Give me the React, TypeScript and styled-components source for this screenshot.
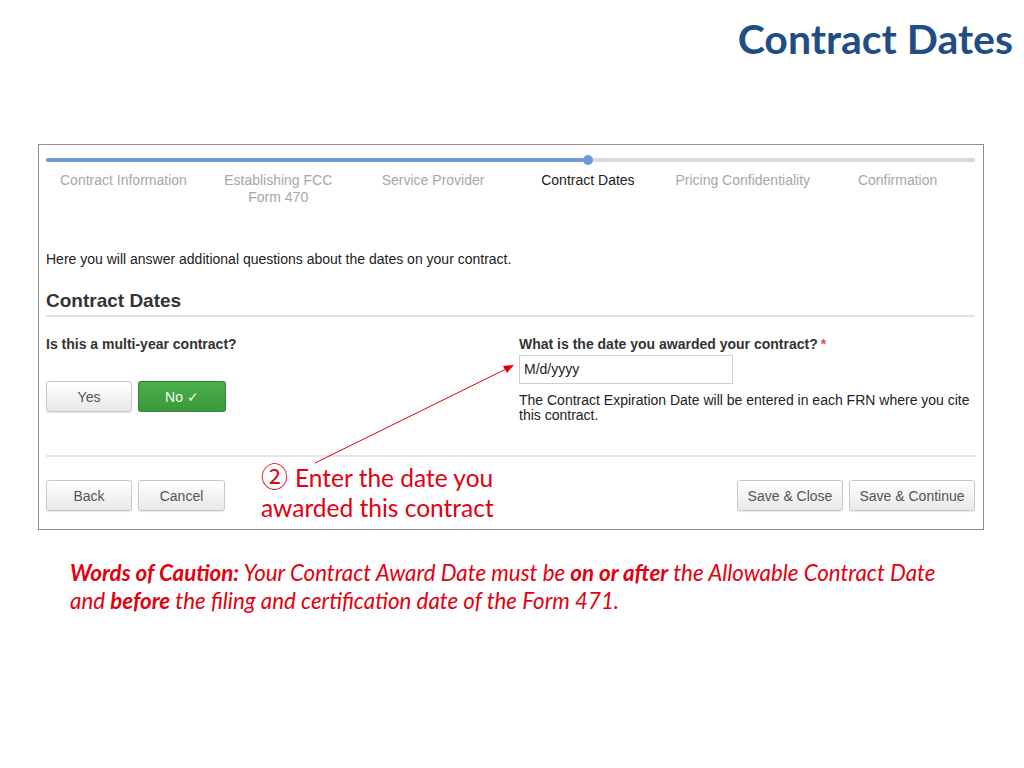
import styled, { createGlobalStyle, css } from "styled-components";

const GlobalStyle = createGlobalStyle`
  html, body {
    margin: 0;
    padding: 0;
    background: #fff;
  }
  * {
    box-sizing: border-box;
  }
`;

const red = "#e3000f";

const steps = [
  { label: "Contract Information", state: "done" },
  { label: "Establishing FCC Form 470", state: "done" },
  { label: "Service Provider", state: "done" },
  { label: "Contract Dates", state: "current" },
  { label: "Pricing Confidentiality", state: "todo" },
  { label: "Confirmation", state: "todo" },
];

const Slide = styled.div`
  position: relative;
  width: 1024px;
  height: 768px;
  overflow: hidden;
  font-family: "Liberation Sans", Arial, sans-serif;
`;

const TitleBar = styled.div`
  display: flex;
  justify-content: flex-end;
  height: 144px;
  padding: 14px 11px 0 0;
`;

const Title = styled.h1`
  margin: 0;
  font-family: Lato, "Open Sans", sans-serif;
  font-weight: 700;
  font-size: 41px;
  line-height: 50px;
  color: #1f4e87;
`;

const Panel = styled.div`
  margin-left: 38px;
  width: 946px;
  height: 386px;
  border: 1px solid #8c8c8c;
  padding: 13px 8px 0 7px;
  color: #333;
  font-size: 14px;
`;

const Track = styled.div`
  position: relative;
  height: 4px;
  background: #dadada;
  border-radius: 2px;
`;

const TrackFill = styled.div`
  height: 4px;
  background: #6b9bd2;
  border-radius: 2px;
`;

const TrackDot = styled.div`
  position: absolute;
  top: -3px;
  width: 10px;
  height: 10px;
  margin-left: -5px;
  border-radius: 50%;
  background: #6b9bd2;
`;

const Steps = styled.div`
  display: grid;
  grid-template-columns: repeat(6, 1fr);
  margin-top: 10px;
  height: 79px;
`;

const Step = styled.div<{ $state: string }>`
  text-align: center;
  font-size: 14px;
  line-height: 17px;
  padding: 0 7px;
  color: ${(p) => (p.$state === "current" ? "#222" : "#a8a8a8")};
`;

const Intro = styled.p`
  margin: 0;
  font-size: 14px;
  line-height: 16px;
  color: #222;
`;

const SectionHeading = styled.h2`
  margin: 22px 0 0;
  padding-bottom: 3px;
  font-size: 19px;
  line-height: 23px;
  font-weight: 700;
  color: #333;
  border-bottom: 2px solid #e3e3e3;
`;

const Questions = styled.div`
  display: grid;
  grid-template-columns: 473px 1fr;
  height: 140px;
  padding-top: 19px;
  border-bottom: 2px solid #e6e6e6;
`;

const Question = styled.div`
  font-weight: 700;
  font-size: 14px;
  line-height: 16px;
  color: #333;
`;

const Required = styled.span`
  color: #d9534f;
  margin-left: 3px;
`;

const Choices = styled.div`
  display: flex;
  gap: 6px;
  margin-top: 29px;
`;

const buttonBase = css`
  height: 31px;
  border-radius: 3px;
  font-family: "Liberation Sans", Arial, sans-serif;
  font-size: 14px;
  padding: 0;
`;

const Button = styled.button<{ $w: number }>`
  ${buttonBase};
  width: ${(p) => p.$w}px;
  color: #555;
  background: linear-gradient(#ffffff, #e8e8e8);
  border: 1px solid #c8c8c8;
  box-shadow: 0 1px 1px rgba(0, 0, 0, 0.1);
`;

const GreenButton = styled.button<{ $w: number }>`
  ${buttonBase};
  width: ${(p) => p.$w}px;
  color: #f3fff3;
  background: linear-gradient(#4cae4c, #3a9a3a);
  border: 1px dotted #2f5f2f;
`;

const DateInput = styled.div`
  width: 214px;
  height: 29px;
  margin-top: 3px;
  border: 1px solid #cfcfcf;
  padding: 5px 4px;
  font-size: 14px;
  line-height: 17px;
  color: #222;
`;

const Help = styled.p`
  margin: 9px 0 0;
  font-size: 14px;
  line-height: 15px;
  color: #222;
  width: 455px;
`;

const Footer = styled.div`
  display: flex;
  justify-content: space-between;
  padding-top: 23px;
`;

const ButtonGroup = styled.div`
  display: flex;
  gap: 6px;
`;

const Callout = styled.div`
  position: absolute;
  left: 261px;
  top: 461px;
  font-family: Lato, "Open Sans", sans-serif;
  font-size: 24.5px;
  line-height: 30px;
  color: ${red};
`;

const Circled = styled.span`
  font-family: "Noto Sans CJK JP", sans-serif;
  font-size: 27px;
  line-height: 30px;
  margin-right: 7px;
`;

const Overlay = styled.svg`
  position: absolute;
  left: 0;
  top: 0;
  pointer-events: none;
`;

const Caution = styled.p`
  margin: 29px 0 0 70px;
  font-family: Lato, "Open Sans", sans-serif;
  font-style: italic;
  font-size: 22.3px;
  line-height: 28px;
  color: ${red};
  b {
    font-weight: 700;
  }
`;

export default function App() {
  const current = steps.findIndex((s) => s.state === "current");
  const pos = ((current + 0.5) / steps.length) * 100;
  return (
    <>
      <GlobalStyle />
      <Slide>
        <TitleBar>
          <Title>Contract Dates</Title>
        </TitleBar>
        <Panel>
          <Track>
            <TrackFill style={{ width: `${pos}%` }} />
            <TrackDot style={{ left: `${pos}%` }} />
          </Track>
          <Steps>
            {steps.map((s) => (
              <Step key={s.label} $state={s.state}>
                {s.label}
              </Step>
            ))}
          </Steps>
          <Intro>
            Here you will answer additional questions about the dates on your
            contract.
          </Intro>
          <SectionHeading>Contract Dates</SectionHeading>
          <Questions>
            <div>
              <Question>Is this a multi-year contract?</Question>
              <Choices>
                <Button $w={86}>Yes</Button>
                <GreenButton $w={88}>No ✓</GreenButton>
              </Choices>
            </div>
            <div>
              <Question>
                What is the date you awarded your contract?
                <Required>*</Required>
              </Question>
              <DateInput>M/d/yyyy</DateInput>
              <Help>
                The Contract Expiration Date will be entered in each FRN where
                you cite this contract.
              </Help>
            </div>
          </Questions>
          <Footer>
            <ButtonGroup>
              <Button $w={86}>Back</Button>
              <Button $w={87}>Cancel</Button>
            </ButtonGroup>
            <ButtonGroup>
              <Button $w={106}>Save &amp; Close</Button>
              <Button $w={126}>Save &amp; Continue</Button>
            </ButtonGroup>
          </Footer>
        </Panel>
        <Caution>
          <b>Words of Caution:</b> Your Contract Award Date must be{" "}
          <b>on or after</b> the Allowable Contract Date
          <br />
          and <b>before</b> the filing and certification date of the Form 471.
        </Caution>
        <Callout>
          <Circled>②</Circled>Enter the date you
          <br />
          awarded this contract
        </Callout>
        <Overlay width="1024" height="768" viewBox="0 0 1024 768">
          <line x1="315" y1="463" x2="506" y2="369" stroke={red} strokeWidth="1" />
          <polygon points="514,365 503,366 507,373" fill={red} />
        </Overlay>
      </Slide>
    </>
  );
}
